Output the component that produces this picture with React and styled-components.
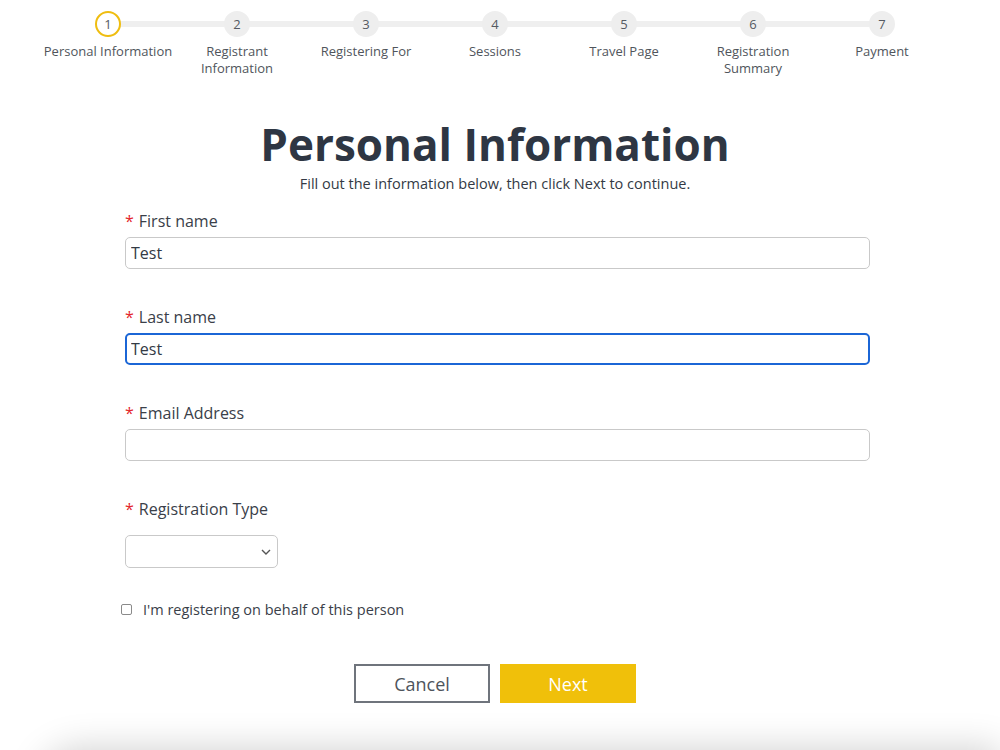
import styled, { createGlobalStyle } from 'styled-components';

const GlobalStyle = createGlobalStyle`
  html, body {
    margin: 0;
    padding: 0;
    background: #fff;
    font-family: 'Open Sans', 'Noto Sans', sans-serif;
    color: #333a45;
    overflow: hidden;
  }
`;

const steps = [
  { n: 1, label: 'Personal Information' },
  { n: 2, label: ['Registrant', 'Information'] },
  { n: 3, label: 'Registering For' },
  { n: 4, label: 'Sessions' },
  { n: 5, label: 'Travel Page' },
  { n: 6, label: ['Registration', 'Summary'] },
  { n: 7, label: 'Payment' },
];

const Page = styled.div`
  width: 990px;
  height: 750px;
  display: flex;
  flex-direction: column;
`;

const Stepper = styled.ol`
  position: relative;
  list-style: none;
  margin: 11px auto 0;
  padding: 0;
  display: grid;
  grid-template-columns: repeat(7, 129px);
  &::before {
    content: '';
    position: absolute;
    left: 64px;
    right: 64px;
    top: 10px;
    height: 6px;
    background: #efefef;
  }
`;

const Step = styled.li`
  position: relative;
  display: flex;
  flex-direction: column;
  align-items: center;
`;

const Dot = styled.span`
  width: 26px;
  height: 26px;
  box-sizing: border-box;
  border-radius: 50%;
  display: flex;
  align-items: center;
  justify-content: center;
  font-size: 13px;
  color: #555a62;
  background: ${(p) => (p.$active ? '#fff' : '#eeeeee')};
  border: 2px solid ${(p) => (p.$active ? '#efbd10' : '#eeeeee')};
`;

const StepLabel = styled.span`
  margin-top: 6px;
  font-size: 13px;
  line-height: 17px;
  color: #50555c;
  text-align: center;
  white-space: nowrap;
`;

const Title = styled.h1`
  margin: 41px 0 0;
  text-align: center;
  font-size: 44px;
  line-height: 52px;
  font-weight: 700;
  color: #2e3643;
`;

const Subtitle = styled.p`
  margin: 4px 0 0;
  text-align: center;
  font-size: 14.5px;
  line-height: 20px;
  color: #333a45;
`;

const Form = styled.form`
  width: 745px;
  margin: 16px 0 0 125px;
  display: flex;
  flex-direction: column;
`;

const Field = styled.div`
  display: flex;
  flex-direction: column;
  margin-bottom: ${(p) => p.$gap || 37}px;
`;

const Label = styled.label`
  font-size: 16px;
  line-height: 22px;
  color: #3a4049;
  margin-bottom: ${(p) => p.$gap || 5}px;
`;

const Star = styled.span`
  color: #e3262b;
  margin-right: 5px;
`;

const Input = styled.input`
  box-sizing: border-box;
  height: 32px;
  width: 100%;
  font-family: inherit;
  font-size: 16px;
  color: #333a45;
  caret-color: #222;
  border-radius: 5px;
  outline: none;
  border: ${(p) => (p.$focus ? '2px solid #1b66d6' : '1px solid #c9c9c9')};
  padding: 0 5px 0 ${(p) => (p.$focus ? 4 : 5)}px;
  background: #fff;
`;

const SelectBox = styled.div`
  box-sizing: border-box;
  width: 153px;
  height: 33px;
  border: 1px solid #c9c9c9;
  border-radius: 5px;
  display: flex;
  align-items: center;
  justify-content: flex-end;
  padding-right: 6px;
`;

const CheckRow = styled.label`
  display: flex;
  align-items: center;
  gap: 11px;
  margin: 1px 0 0 -4px;
  font-size: 14.5px;
  color: #3a4049;
`;

const Box = styled.span`
  width: 9px;
  height: 9px;
  border: 1px solid #8a8a8a;
  border-radius: 2px;
  background: #fff;
`;

const Actions = styled.div`
  display: flex;
  justify-content: center;
  gap: 10px;
  margin-top: 45px;
`;

const Button = styled.button`
  box-sizing: border-box;
  width: 136px;
  height: 39px;
  font-family: inherit;
  font-size: 18px;
  cursor: pointer;
  border: ${(p) => (p.$primary ? '0' : '2px solid #6f747c')};
  background: ${(p) => (p.$primary ? '#f0c00a' : '#fff')};
  color: ${(p) => (p.$primary ? '#fff' : '#4e545c')};
`;

const ShadeClip = styled.div`
  margin-top: auto;
  height: 38px;
  overflow: hidden;
  width: 1000px;
`;

const ShadeBody = styled.div`
  margin: 40px 0 0 40px;
  height: 60px;
  border-radius: 40px 0 0 0;
  box-shadow: 0 -4px 36px rgba(0, 0, 0, 0.18);
  background: #e4e4e4;
`;

export default function App() {
  return (
    <>
      <GlobalStyle />
      <Page>
        <Stepper>
          {steps.map((s) => (
            <Step key={s.n}>
              <Dot $active={s.n === 1}>{s.n}</Dot>
              <StepLabel>
                {Array.isArray(s.label) ? (
                  <>
                    {s.label[0]}
                    <br />
                    {s.label[1]}
                  </>
                ) : (
                  s.label
                )}
              </StepLabel>
            </Step>
          ))}
        </Stepper>

        <Title>Personal Information</Title>
        <Subtitle>Fill out the information below, then click Next to continue.</Subtitle>

        <Form onSubmit={(e) => e.preventDefault()}>
          <Field>
            <Label>
              <Star>*</Star>First name
            </Label>
            <Input defaultValue="Test" />
          </Field>
          <Field>
            <Label>
              <Star>*</Star>Last name
            </Label>
            <Input $focus autoFocus defaultValue="Test" />
          </Field>
          <Field>
            <Label>
              <Star>*</Star>Email Address
            </Label>
            <Input />
          </Field>
          <Field $gap={31}>
            <Label $gap={15}>
              <Star>*</Star>Registration Type
            </Label>
            <SelectBox>
              <svg width="10" height="6" viewBox="0 0 10 6" fill="none">
                <path d="M1 1l4 4 4-4" stroke="#555" strokeWidth="1.4" />
              </svg>
            </SelectBox>
          </Field>
          <CheckRow>
            <Box />
            I'm registering on behalf of this person
          </CheckRow>
        </Form>

        <Actions>
          <Button type="button">Cancel</Button>
          <Button type="button" $primary>
            Next
          </Button>
        </Actions>

        <ShadeClip>
          <ShadeBody />
        </ShadeClip>
      </Page>
    </>
  );
}
